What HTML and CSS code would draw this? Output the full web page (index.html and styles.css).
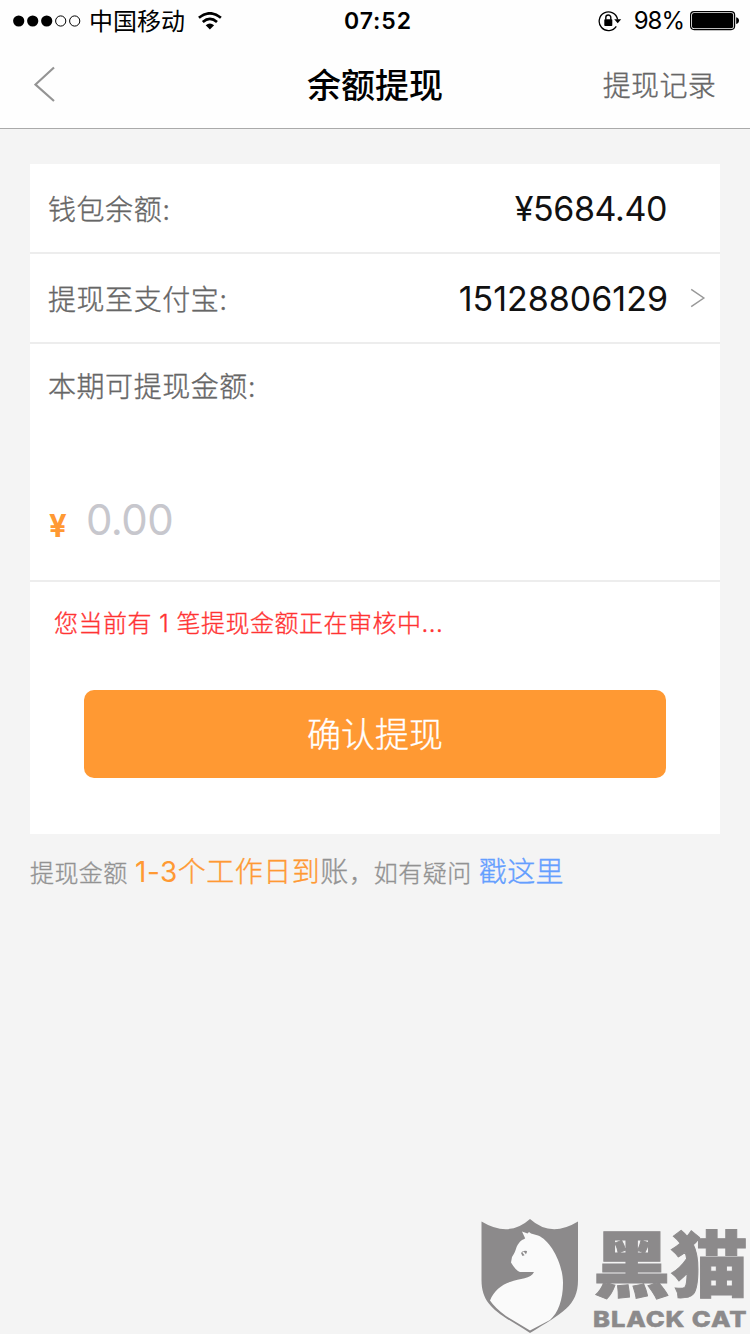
FILE: index.html
```html
<!DOCTYPE html>
<html lang="zh-CN">
<head>
<meta charset="utf-8">
<title>余额提现</title>
<link rel="stylesheet" href="styles.css">
</head>
<body>
<header class="header">
  <div class="status">
    <div class="status-left">
      <svg class="signal" width="68" height="12" viewBox="0 0 68 12">
        <circle cx="5.7" cy="6" r="5.6"/><circle cx="19.7" cy="6" r="5.6"/><circle cx="33.7" cy="6" r="5.6"/>
        <g fill="none" stroke="#000" stroke-width="1"><circle cx="47.7" cy="6" r="5.1"/><circle cx="61.7" cy="6" r="5.1"/></g>
      </svg>
      <span class="carrier">中国移动</span>
      <svg class="wifi" width="24" height="18" viewBox="0 0 24 18">
        <g fill="none" stroke="#000" stroke-width="2.7"><path d="M.9 5.8Q11.9-3.2 22.9 5.8"/><path d="M4.8 10Q11.9 3.8 19 10"/></g>
        <path d="M7.700 13.300Q11.900 9.800 16.100 13.300L11.900 17.600Z"/>
      </svg>
    </div>
    <span class="clock">07:52</span>
    <div class="status-right">
      <svg class="lock" width="24" height="22" viewBox="0 0 24 22">
        <path d="M18.300 16.300A9.300 9.300 0 1 1 19.600 9.500" fill="none" stroke="#000" stroke-width="1.3"/>
        <path d="M16.200 9.300H23.200L19.700 13.200Z"/><rect x="6.300" y="9.300" width="8" height="6.600" rx=".7"/>
        <path d="M7.800 9.800V7.500a2.500 2.500 0 0 1 5 0V9.800" fill="none" stroke="#000" stroke-width="1.4"/>
      </svg>
      <span class="percent">98%</span>
      <svg class="battery" width="50" height="20" viewBox="0 0 50 20">
        <rect x=".6" y=".6" width="44" height="18" rx="3.5" fill="none" stroke="#000" stroke-width="1.2"/>
        <rect x="2" y="2" width="41.2" height="15.2" rx="2"/><path d="M46.2 6.2q2.8.6 2.8 3.4t-2.8 3.4Z"/>
      </svg>
    </div>
  </div>
  <nav class="nav">
    <svg class="back" width="24" height="38" viewBox="0 0 24 38"><path d="M20 2.500L1.500 19.500L20 36" fill="none" stroke="#949494" stroke-width="2.2"/></svg>
    <h1 class="title">余额提现</h1>
    <span class="history">提现记录</span>
  </nav>
</header>
<main class="card">
  <div class="row"><span class="label">钱包余额:</span><span class="value balance">¥5684.40</span></div>
  <div class="row"><span class="label">提现至支付宝:</span><span class="value account">15128806129</span>
    <svg class="chevron" width="16" height="20" viewBox="0 0 16 20"><path d="M1.2 1.3L13.8 10L1.2 18.7" fill="none" stroke="#999" stroke-width="1.5"/></svg>
  </div>
  <section class="amount">
    <span class="label">本期可提现金额:</span>
    <div class="entry"><span class="yen">¥</span><span class="placeholder">0.00</span></div>
  </section>
  <section class="submit">
    <p class="notice">您当前有 1 笔提现金额正在审核中...</p>
    <button class="confirm">确认提现</button>
  </section>
</main>
<p class="hint"><span class="hint-a">提现金额</span><span class="days"><span class="range">1-3</span>个工作日到</span><span class="arrive">账</span><span class="hint-b">，如有疑问</span><span class="link">戳这里</span></p>
<aside class="brand">
  <svg class="shield" width="98" height="116" viewBox="0 0 98 116">
    <path d="M.5 3.500Q28 20 49 1Q70 20 97 3.500V62C97 88 81 95 49 115C17 95 .5 88 .5 62Z" fill="#8c8a8b"/>
    <path d="M41 13.500L46.500 15.500L48 14L50 15.500L57 17.500C69 22 82 45 82 65C82 82 77 95 69 102L49 112.500L25 98Q14 90 9 82.500C13 73 20 67 29 64C39 60 50 61 53 54H39Q35 53 30 44.500L31 39C36 32 34 30 38 25C41 21 45 21 44 20Z" fill="#fafafa"/>
    <path d="M40 35Q42 32 46 33Q46 37 41.500 38Z" fill="#8c8a8b"/><path d="M42 34L44.500 37" stroke="#fafafa" stroke-width="1.8"/>
  </svg>
  <div class="brand-text"><span class="brand-cn">黑猫</span><span class="brand-en">BLACK CAT</span></div>
</aside>
</body>
</html>
```
FILE: styles.css
```css
* { box-sizing: border-box; }
body {
  margin: 0;
  width: 750px;
  height: 1334px;
  overflow: hidden;
  position: relative;
  background: #f4f4f4;
  font-family: Inter, "Noto Sans CJK SC", sans-serif;
  color: #666;
}
svg { display: block; flex: none; }
span, h1, p { white-space: nowrap; }
.header { height: 129px; background: #fefefe; border-bottom: 1px solid #aaa; }
.status { display: grid; grid-template-columns: 1fr auto 1fr; height: 40px; align-items: center; color: #000; }
.status-left { display: flex; align-items: center; padding-left: 13px; }
.carrier { font-size: 24px; line-height: 40px; margin-left: 8px; padding-top: 2px; }
.wifi { margin-left: 13px; }
.clock { font-size: 23px; font-weight: 600; letter-spacing: .9px; line-height: 40px; padding-left: 6px; }
.status-right { display: flex; align-items: center; justify-content: flex-end; padding-right: 10px; }
.percent { font-size: 24px; margin: 0 6px 0 12px; letter-spacing: -1px; line-height: 40px; }
.nav { display: grid; grid-template-columns: 1fr auto 1fr; align-items: center; height: 88px; padding: 0 34px; }
.title { margin: 0; font-size: 34px; font-weight: 500; line-height: 60px; color: #000; padding-top: 4px; }
.history { justify-self: end; font-size: 28px; letter-spacing: .3px; line-height: 50px; padding-top: 3px; }
.history, .label, .notice, .confirm, .hint { font-weight: 300; -webkit-text-stroke: .35px currentColor; }
.card { width: 690px; height: 670px; margin: 35px 0 0 30px; background: #fff; }
.row { display: flex; align-items: center; height: 90px; border-bottom: 2px solid #ededed; padding: 0 14px 0 18px; }
.label { font-size: 28px; letter-spacing: .55px; line-height: 40px; padding-top: 3px; }
.value { font-size: 34px; line-height: 40px; color: #111; margin-left: auto; padding-top: 1px; }
.balance { margin-right: 39px; letter-spacing: -.4px; }
.account { margin-right: 22px; }
.amount { display: flex; flex-direction: column; height: 238px; border-bottom: 2px solid #ededed; padding: 20px 18px 0; }
.entry { display: flex; align-items: center; margin-top: 86px; height: 52px; }
.yen { font-size: 31px; font-weight: 700; color: #ff9933; padding-top: 13px; width: 38px; padding-left: 1px; }
.placeholder { font-size: 42px; letter-spacing: -.6px; color: #c7c7cd; }
.submit { padding: 22px 54px 0; }
.notice { margin: 0 0 46px -30px; font-size: 24px; letter-spacing: .5px; line-height: 40px; color: #ff3333; }
.confirm { display: block; width: 582px; height: 88px; padding: 2px 0 0; border: 0; border-radius: 10px; background: #ff9933; color: #fff; font: 300 34px/86px Inter, "Noto Sans CJK SC", sans-serif; }
.hint { display: flex; align-items: baseline; margin: 18px 0 0 30px; font-size: 24px; line-height: 40px; color: #929292; }
.hint-a { letter-spacing: .4px; width: 105px; }
.days { font-size: 28px; color: #ff9933; letter-spacing: .5px; }
.range { font-weight: 400; -webkit-text-stroke: 0; }
.arrive { font-size: 28px; }
.hint-b { letter-spacing: .5px; margin-left: 1px; }
.link { font-size: 28px; color: #649eff; letter-spacing: .4px; margin-left: 7px; }
.brand { position: absolute; left: 481px; top: 1218px; display: flex; gap: 14px; color: #8c8a8b; }
.brand-text { display: flex; flex-direction: column; padding-top: 8px; }
.brand-cn { font-size: 76px; font-weight: 900; line-height: 78px; height: 78px; -webkit-text-stroke: 1px #8c8a8b; transform: scale(1.02, .94); transform-origin: left; }
.brand-en { font-size: 22px; font-weight: 800; line-height: 30px; letter-spacing: .8px; -webkit-text-stroke: .5px #8c8a8b; transform: scaleX(1.16); transform-origin: left; }
```
